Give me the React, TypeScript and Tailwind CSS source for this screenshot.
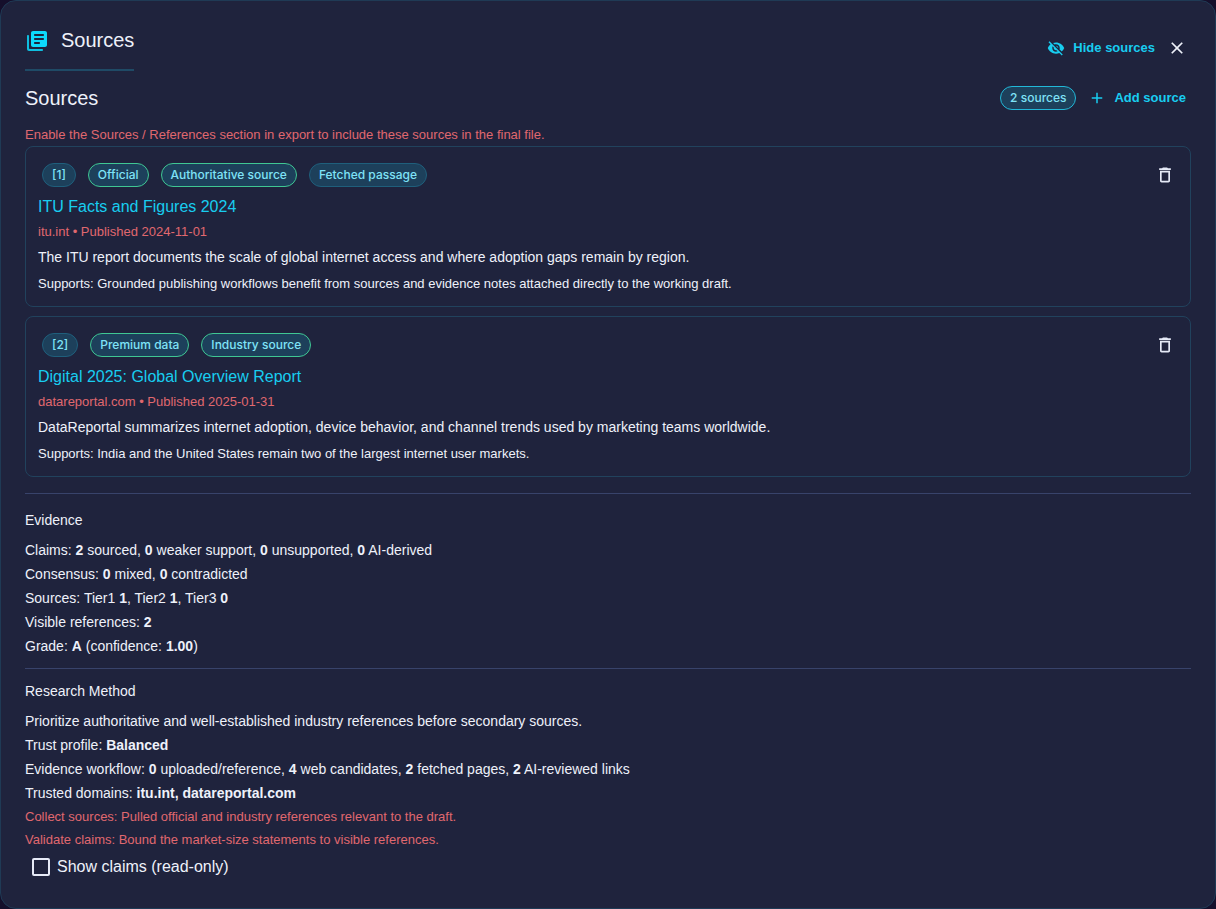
import React, { useState } from "react"
import {
  MdAdd,
  MdClose,
  MdDeleteOutline,
  MdVisibilityOff,
} from "react-icons/md"

/* ================= Types ================= */
type Chip = {
  label: string
  strong?: boolean
}

type Source = {
  id: number
  chips: Chip[]
  title: string
  meta: string
  summary: string
  supports: string
}

const sources: Source[] = [
  {
    id: 1,
    chips: [
      { label: "Official", strong: true },
      { label: "Authoritative source", strong: true },
      { label: "Fetched passage" },
    ],
    title: "ITU Facts and Figures 2024",
    meta: "itu.int • Published 2024-11-01",
    summary:
      "The ITU report documents the scale of global internet access and where adoption gaps remain by region.",
    supports:
      "Supports: Grounded publishing workflows benefit from sources and evidence notes attached directly to the working draft.",
  },
  {
    id: 2,
    chips: [
      { label: "Premium data", strong: true },
      { label: "Industry source", strong: true },
    ],
    title: "Digital 2025: Global Overview Report",
    meta: "datareportal.com • Published 2025-01-31",
    summary:
      "DataReportal summarizes internet adoption, device behavior, and channel trends used by marketing teams worldwide.",
    supports:
      "Supports: India and the United States remain two of the largest internet user markets.",
  },
]

function LibraryIcon() {
  return (
    <svg width="24" height="24" viewBox="0 0 24 24" fill="#0dd9fb" aria-hidden="true">
      <path
        opacity=".85"
        d="M3 6c-.55 0-1 .45-1 1v13c0 1.1.9 2 2 2h13c.55 0 1-.45 1-1s-.45-1-1-1H5c-.55 0-1-.45-1-1V7c0-.55-.45-1-1-1z"
      />
      <path d="M20 2H8c-1.1 0-2 .9-2 2v12c0 1.1.9 2 2 2h12c1.1 0 2-.9 2-2V4c0-1.1-.9-2-2-2zm-2 9h-8c-.55 0-1-.45-1-1s.45-1 1-1h8c.55 0 1 .45 1 1s-.45 1-1 1zm-4 4h-4c-.55 0-1-.45-1-1s.45-1 1-1h4c.55 0 1 .45 1 1s-.45 1-1 1zm4-8h-8c-.55 0-1-.45-1-1s.45-1 1-1h8c.55 0 1 .45 1 1s-.45 1-1 1z" />
    </svg>
  )
}

function Badge({ label, strong }: Chip) {
  return (
    <span
      className={`flex h-6 items-center rounded-full border bg-[#1d405b] px-[9px] font-[Inter,sans-serif] text-xs font-medium text-[#7fe3f7] ${
        strong ? "border-[#3fc793]" : "border-[#1f5f7c]"
      }`}
    >
      {label}
    </span>
  )
}

function SourceCard({ source }: { source: Source }) {
  return (
    <article className="rounded-lg border border-[#21425d] px-3 pt-4 pb-3">
      <div className="flex items-start justify-between">
        <div className="flex flex-wrap gap-3 pl-1">
          <Badge label={`[${source.id}]`} />
          {source.chips.map(chip => (
            <Badge key={chip.label} {...chip} />
          ))}
        </div>
        <button aria-label="Delete source" className="mr-[3px] pt-0.5 text-[#e6eaf7]">
          <MdDeleteOutline size={20} />
        </button>
      </div>

      <a href="#" className="mt-2 block text-base leading-6 text-[#18cdf0]">
        {source.title}
      </a>
      <p className="mt-1 text-[13px] leading-[18px] text-[#e0686f]">{source.meta}</p>
      <p className="mt-1 text-sm leading-6">{source.summary}</p>
      <p className="mt-1 text-[13px] leading-[21px]">{source.supports}</p>
    </article>
  )
}

export default function App() {
  const [showClaims, setShowClaims] = useState(false)

  return (
    <div className="min-h-screen bg-[#150f2b] font-['Liberation_Sans',Arial,sans-serif] text-[#eef1fa]">
      <main className="min-h-screen rounded-2xl border border-[#1f3a55] bg-[#1f233d] px-6 pt-6 pb-6">
        {/* Header */}
        <header className="flex items-start justify-between">
          <div className="flex h-[46px] items-start gap-3 border-b-2 border-[#1f4a66]">
            <div className="pt-1">
              <LibraryIcon />
            </div>
            <h1 className="text-xl leading-[30px]">Sources</h1>
          </div>
          <div className="flex items-center gap-2 pt-[9px]">
            <button className="flex items-center gap-2 text-[13px] leading-6 font-bold text-[#18cdf0]">
              <MdVisibilityOff size={18} />
              Hide sources
            </button>
            <button aria-label="Close" className="p-1">
              <MdClose size={20} />
            </button>
          </div>
        </header>

        <div className="mt-3 flex items-center justify-between">
          <h2 className="text-xl leading-[30px]">Sources</h2>
          <div className="flex items-center gap-3 pr-[5px]">
            <span className="flex h-6 items-center rounded-full border border-[#22b8d8] bg-[#1d405b] px-[9px] font-[Inter,sans-serif] text-xs font-medium text-[#7fe3f7]">
              2 sources
            </span>
            <button className="flex items-center gap-2 text-[13px] leading-6 font-bold text-[#18cdf0]">
              <MdAdd size={18} />
              Add source
            </button>
          </div>
        </div>

        <p className="mt-3 mb-px text-[13px] leading-5 text-[#e0686f]">
          Enable the Sources / References section in export to include these sources in the final file.
        </p>

        <div className="flex flex-col gap-[9px]">
          {sources.map(source => (
            <SourceCard key={source.id} source={source} />
          ))}
        </div>

        {/* Evidence */}
        <section className="mt-4 border-t border-[#38436b] pt-4 text-sm leading-6">
          <h3 className="mb-2 leading-5">Evidence</h3>
          <p>
            Claims: <b>2</b> sourced, <b>0</b> weaker support, <b>0</b> unsupported, <b>0</b> AI-derived
          </p>
          <p>
            Consensus: <b>0</b> mixed, <b>0</b> contradicted
          </p>
          <p>
            Sources: Tier1 <b>1</b>, Tier2 <b>1</b>, Tier3 <b>0</b>
          </p>
          <p>
            Visible references: <b>2</b>
          </p>
          <p>
            Grade: <b>A</b> (confidence: <b>1.00</b>)
          </p>
        </section>

        {/* Research method */}
        <section className="mt-[10px] border-t border-[#38436b] pt-3 text-sm leading-6">
          <h3 className="mb-2 leading-5">Research Method</h3>
          <p>Prioritize authoritative and well-established industry references before secondary sources.</p>
          <p>
            Trust profile: <b>Balanced</b>
          </p>
          <p>
            Evidence workflow: <b>0</b> uploaded/reference, <b>4</b> web candidates, <b>2</b> fetched pages,{" "}
            <b>2</b> AI-reviewed links
          </p>
          <p>
            Trusted domains: <b>itu.int, datareportal.com</b>
          </p>
          <p className="text-[13px] leading-[23px] text-[#e0686f]">
            Collect sources: Pulled official and industry references relevant to the draft.
          </p>
          <p className="text-[13px] leading-[23px] text-[#e0686f]">
            Validate claims: Bound the market-size statements to visible references.
          </p>
        </section>

        <label className="mt-1 ml-[7px] flex w-fit items-center gap-[7px] text-base leading-6">
          <input
            type="checkbox"
            checked={showClaims}
            onChange={e => setShowClaims(e.target.checked)}
            className="size-[18px] appearance-none rounded-xs border-2 border-[#e6eaf7] checked:bg-[#18cdf0]"
          />
          Show claims (read-only)
        </label>
      </main>
    </div>
  )
}
